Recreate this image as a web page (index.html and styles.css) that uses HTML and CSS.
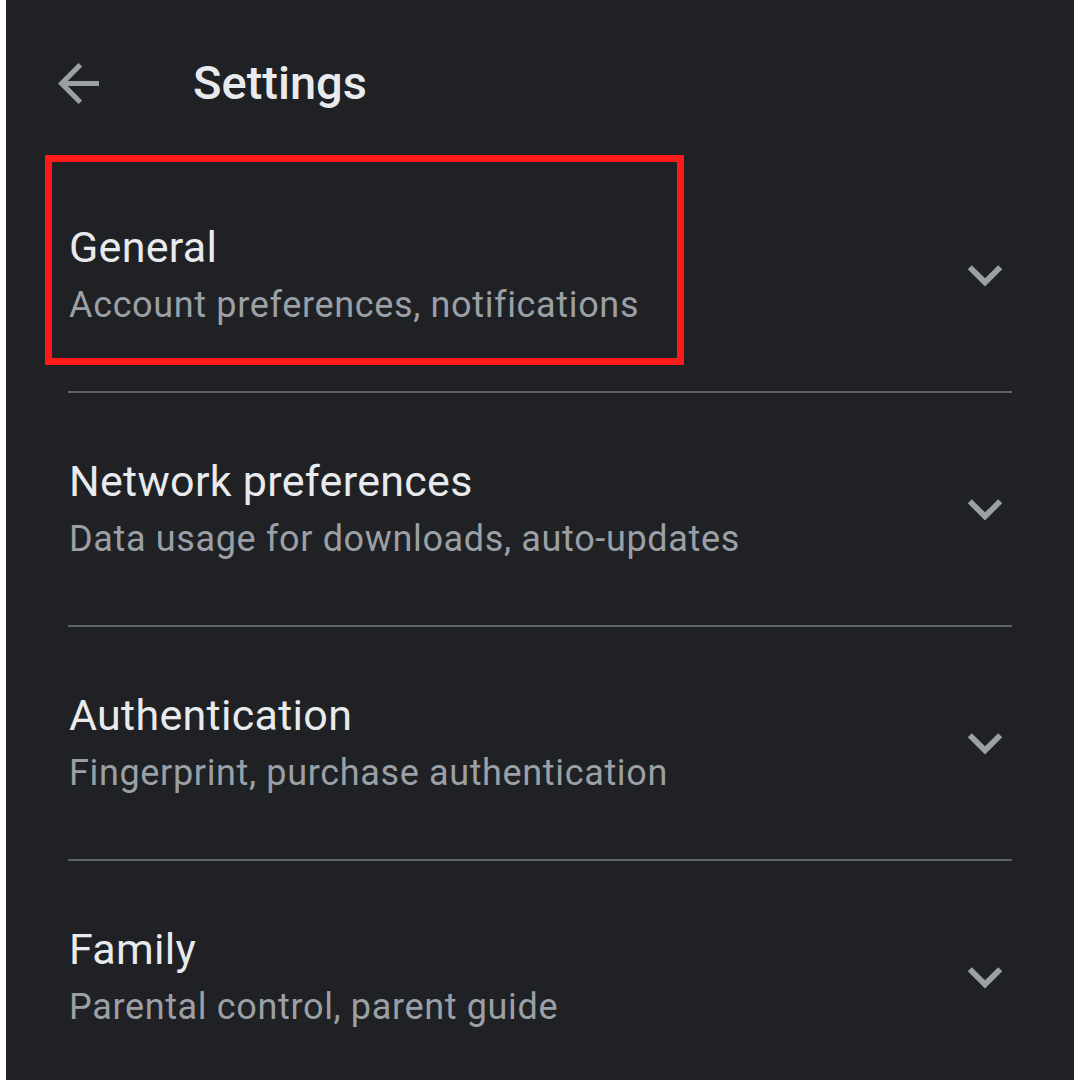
FILE: index.html
```html
<!DOCTYPE html>
<html lang="en">
<head>
    <meta charset="UTF-8">
    <meta name="viewport" content="width=device-width, initial-scale=1.0">
    <title>Settings</title>
    <link rel="stylesheet" href="styles.css">
</head>
<body>
    <div class="screen">
        <header class="top-bar">
            <svg class="back-icon" viewBox="4 4 16 16" aria-hidden="true">
                <path d="M20 11H7.83l5.59-5.59L12 4l-8 8 8 8 1.41-1.41L7.83 13H20v-2z"/>
            </svg>
            <h1>Settings</h1>
        </header>

        <ul class="settings-list">
            <li class="settings-item highlighted">
                <div class="item-text">
                    <div class="item-title">General</div>
                    <div class="item-sub">Account preferences, notifications</div>
                </div>
                <svg class="chevron" viewBox="4 4 16 16" aria-hidden="true">
                    <path d="M16.59 8.59L12 13.17 7.41 8.59 6 10l6 6 6-6z"/>
                </svg>
                <span class="highlight-box"></span>
            </li>
            <li class="settings-item">
                <div class="item-text">
                    <div class="item-title">Network preferences</div>
                    <div class="item-sub">Data usage for downloads, auto-updates</div>
                </div>
                <svg class="chevron" viewBox="4 4 16 16" aria-hidden="true">
                    <path d="M16.59 8.59L12 13.17 7.41 8.59 6 10l6 6 6-6z"/>
                </svg>
            </li>
            <li class="settings-item">
                <div class="item-text">
                    <div class="item-title">Authentication</div>
                    <div class="item-sub">Fingerprint, purchase authentication</div>
                </div>
                <svg class="chevron" viewBox="4 4 16 16" aria-hidden="true">
                    <path d="M16.59 8.59L12 13.17 7.41 8.59 6 10l6 6 6-6z"/>
                </svg>
            </li>
            <li class="settings-item">
                <div class="item-text">
                    <div class="item-title">Family</div>
                    <div class="item-sub">Parental control, parent guide</div>
                </div>
                <svg class="chevron" viewBox="4 4 16 16" aria-hidden="true">
                    <path d="M16.59 8.59L12 13.17 7.41 8.59 6 10l6 6 6-6z"/>
                </svg>
            </li>
        </ul>
    </div>
</body>
</html>
```

FILE: styles.css
```css
html,
body {
    margin: 0;
    padding: 0;
    background-color: #ffffff;
    overflow: hidden;
}

body {
    font-family: 'Roboto', 'Noto Sans', sans-serif;
}

.screen {
    margin: 0 6px;
    height: 1080px;
    overflow: hidden;
    background-color: #202124;
    color: #e8eaed;
}

.top-bar {
    display: flex;
    align-items: center;
    height: 159px;
    box-sizing: border-box;
    padding: 55px 0 48px 52px;
}

.back-icon {
    width: 41px;
    height: 41px;
    fill: #9aa0a6;
}

.top-bar h1 {
    margin: 0 0 0 94px;
    font-size: 47px;
    line-height: 56px;
    font-weight: 500;
    color: #e8eaed;
}

.settings-list {
    list-style: none;
    margin: 0 62px;
    padding: 0;
}

.settings-item {
    position: relative;
    display: flex;
    align-items: center;
    justify-content: space-between;
    height: 234px;
    box-sizing: border-box;
    border-bottom: 2px solid #5f6368;
}

.item-text {
    padding: 4px 0 0 1px;
}

.item-title {
    font-size: 43px;
    line-height: 56px;
    letter-spacing: 0.3px;
    color: #e8eaed;
}

.item-sub {
    font-size: 36px;
    line-height: 60px;
    letter-spacing: 0.65px;
    color: #9aa0a6;
}

.chevron {
    width: 46px;
    height: 46px;
    margin-right: 4px;
    fill: #9aa0a6;
}

.highlight-box {
    position: absolute;
    top: -4px;
    left: -23px;
    width: 639px;
    height: 210px;
    box-sizing: border-box;
    border: 7px solid #ff1a1a;
}
```
